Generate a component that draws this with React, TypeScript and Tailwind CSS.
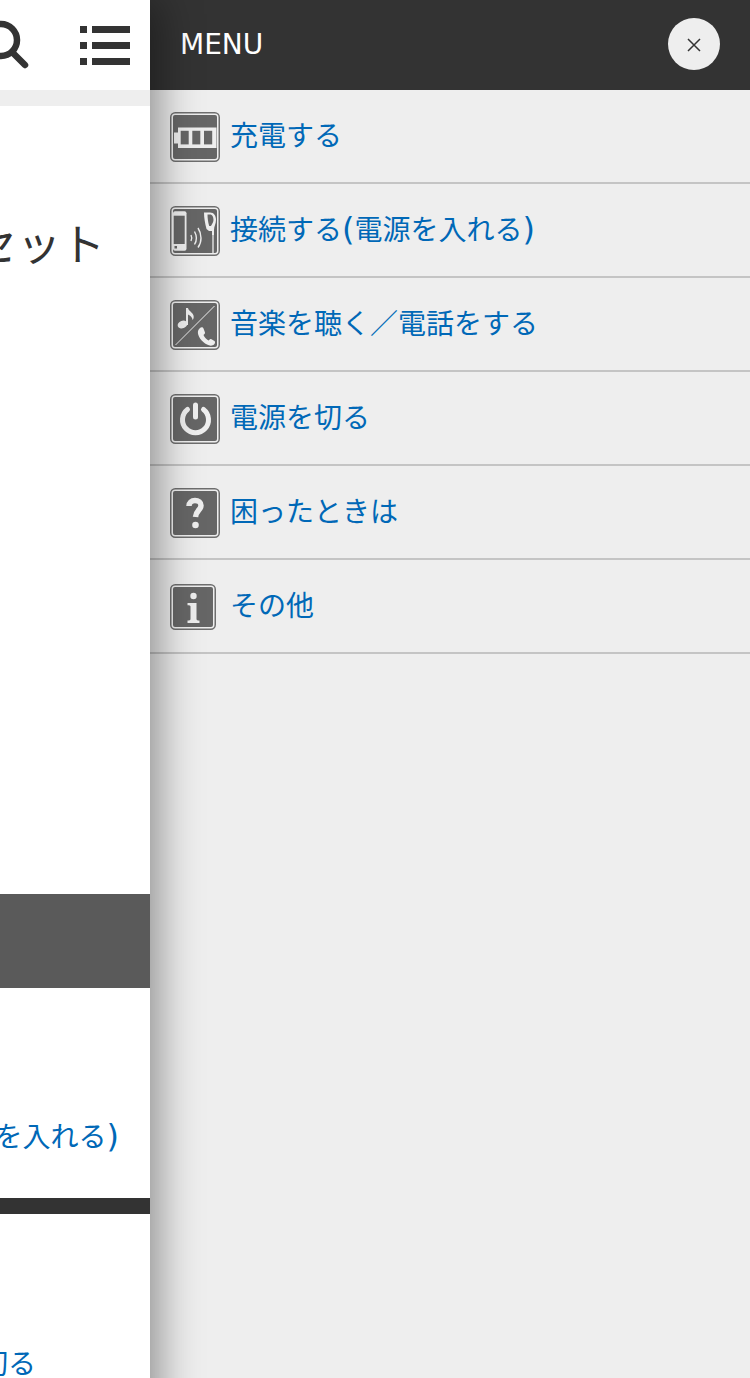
import React from "react";

const FONT = "font-['DejaVu_Sans','Noto_Sans_CJK_JP',sans-serif]";

const IconFrame = ({ size = 50, children }: any) => (
  <svg width={size} height={size} viewBox={`0 0 ${size} ${size}`} className="shrink-0">
    <rect x="0.75" y="0.75" width={size - 1.5} height={size - 1.5} rx="4.5" fill="#eeeeee" stroke="#6e6e6e" strokeWidth="1.5" />
    <rect x="3" y="3" width={size - 6} height={size - 6} rx="2" fill="#666666" />
    {children}
  </svg>
);

const BatteryIcon = () => (
  <IconFrame>
    <path d="M8 15.5H46.5V36H8V31.5H4V20.5H8Z" fill="#eeeeee" />
    <rect x="10.7" y="18.8" width="8" height="13.6" fill="#666666" />
    <rect x="22.3" y="18.8" width="8" height="13.6" fill="#666666" />
    <rect x="34" y="18.8" width="8.2" height="13.6" fill="#666666" />
  </IconFrame>
);

const ConnectIcon = () => (
  <IconFrame>
    <rect x="3" y="5.3" width="13.5" height="39.4" rx="2" fill="#eeeeee" />
    <rect x="3.7" y="9.7" width="11" height="28.3" fill="#666666" />
    <rect x="4.5" y="40" width="2.5" height="2.5" fill="#666666" />
    <path d="M21 29C22 31 22 33 21 35M24.5 25.5C27 30 27 34.5 24.5 38.5M28 22C32 28 32 36 28 41.5" fill="none" stroke="#eeeeee" strokeWidth="1.4" />
    <path d="M34 6.5H40C44 6.5 46 10 46 14C46 18 44 20 44 24L44 29H42V25H39L36.5 23C35 17 34 12 34 6.5Z" fill="#eeeeee" />
    <path d="M37.5 8.5H40C42.5 8.5 43.5 11 43.5 14C43.5 16 42 18 41 20H39.2C38 16 37.5 12 37.5 8.5Z" fill="#666666" />
    <path d="M43 28V47" stroke="#eeeeee" strokeWidth="1.3" />
  </IconFrame>
);

const MusicIcon = () => (
  <IconFrame>
    <path d="M5.5 45L44.5 6" stroke="#eeeeee" strokeWidth="1" />
    <ellipse cx="12.5" cy="24.5" rx="5" ry="3.7" fill="#eeeeee" transform="rotate(-20 12.5 24.5)" />
    <path d="M16 8H18C18.5 11 22.5 12 23.5 15.5C24 17.5 23.5 19 22.5 20C22.5 17.5 20.5 15.5 18 14.5V25H16Z" fill="#eeeeee" />
    <path d="M30 28C31 27 33 27 33.5 28.5L35 32.5C35.3 33.5 34 34.5 33.5 35C34.5 37.5 36.5 39.5 38.5 40.5C39 40 40 38.5 41 39L44.5 41C45.5 41.8 45 43.5 44 44.5C42.5 46 39.5 46 37 44.5C32 42 27 36 28 31C28.2 30 29 29 30 28Z" fill="#eeeeee" />
  </IconFrame>
);

const PowerIcon = () => (
  <IconFrame>
    <path d="M17.5 15.5A13 13 0 1 0 33.5 15.5" fill="none" stroke="#eeeeee" strokeWidth="5" strokeLinecap="round" />
    <path d="M25.5 11V23" stroke="#eeeeee" strokeWidth="5" strokeLinecap="round" />
  </IconFrame>
);

const HelpIcon = () => (
  <IconFrame>
    <path d="M19 18C19 14.5 21.5 12.5 25 12.5C28.5 12.5 31 14.5 31 17.5C31 22 26 22.5 25.5 29" fill="none" stroke="#eeeeee" strokeWidth="5.5" />
    <circle cx="25.5" cy="37" r="3.3" fill="#eeeeee" />
  </IconFrame>
);

const InfoIcon = () => (
  <IconFrame size={46}>
    <circle cx="23.5" cy="12" r="3.2" fill="#eeeeee" />
    <path d="M17.5 19H26.5V35C26.5 36 27.5 36.5 29.5 36.5V39H17.5V36.5C19.5 36.5 20.5 36 20.5 35V22.5C20.5 21.5 19.5 21.2 17.5 21.2Z" fill="#eeeeee" />
  </IconFrame>
);

// the parens in the picture are taller and wider than the kana around them
const Paren = ({ children }: any) => <span className="text-[32px] leading-none">{children}</span>;

const connectLabel = (
  <>
    接続する<Paren>(</Paren>電源を入れる<Paren>)</Paren>
  </>
);

const menu = [
  { id: "charge", label: "充電する", icon: <BatteryIcon /> },
  { id: "connect", label: connectLabel, icon: <ConnectIcon /> },
  { id: "music", label: "音楽を聴く／電話をする", icon: <MusicIcon /> },
  { id: "power", label: "電源を切る", icon: <PowerIcon /> },
  { id: "help", label: "困ったときは", icon: <HelpIcon /> },
  { id: "other", label: "その他", icon: <InfoIcon /> },
];

export default function App() {
  return (
    <div className={`flex h-[1378px] w-[750px] overflow-hidden bg-white ${FONT}`}>
      {/* page behind the menu, only its right edge is visible */}
      <div className="relative z-10 flex h-[1500px] w-[150px] shrink-0 flex-col overflow-hidden bg-white shadow-[8px_0_40px_rgba(0,0,0,0.42)]">
        <div className="flex h-[90px] shrink-0 items-center">
          <svg width="30" height="90" viewBox="0 0 30 90" className="shrink-0">
            <circle cx="1" cy="40" r="16" fill="none" stroke="#333333" strokeWidth="6.5" />
            <path d="M13 53L25 65" stroke="#333333" strokeWidth="6.5" strokeLinecap="round" />
          </svg>
          <div className="ml-[50px] flex flex-col gap-[9px]">
            {[0, 1, 2].map((i) => (
              <div key={i} className="flex gap-[5px]">
                <div className="h-[7px] w-[7px] bg-[#333333]" />
                <div className="h-[7px] w-[38px] bg-[#333333]" />
              </div>
            ))}
          </div>
        </div>
        <div className="h-4 shrink-0 bg-[#eeeeee]" />
        <div className="flex h-[788px] shrink-0 justify-end pr-[45px] pt-[110px]">
          <h1 className="whitespace-nowrap text-[44px] font-normal leading-[60px] text-[#333333]">ヘッドセット</h1>
        </div>
        <div className="h-[94px] shrink-0 bg-[#5a5a5a]" />
        <div className="flex h-[210px] shrink-0 justify-end pr-[31px] pt-[129px]">
          <span className="whitespace-nowrap text-[28px] leading-[42px] text-[#0068b7]">
            接続する<Paren>(</Paren>電源を入れる<Paren>)</Paren>
          </span>
        </div>
        <div className="h-4 shrink-0 bg-[#333333]" />
        <div className="flex flex-1 justify-end pr-[114px] pt-[130px]">
          <span className="whitespace-nowrap text-[28px] leading-[42px] text-[#0068b7]">電源を切る</span>
        </div>
      </div>

      {/* menu panel */}
      <div className="flex flex-1 flex-col bg-[#eeeeee]">
        <div className="flex h-[90px] shrink-0 items-center justify-between bg-[#333333] px-[30px]">
          <span className="text-[28px] leading-[42px] text-white">MENU</span>
          <button className="mb-[2px] flex h-[52px] w-[52px] items-center justify-center rounded-full bg-[#eeeeee]">
            <svg width="14" height="14" viewBox="0 0 14 14" className="mt-[2px]">
              <path d="M1 1L13 13M13 1L1 13" stroke="#333333" strokeWidth="1.5" />
            </svg>
          </button>
        </div>
        <ul>
          {menu.map((item) => (
            <li key={item.id} className="flex h-[94px] items-center gap-[10px] border-b-2 border-[#c4c4c4] pl-5 pt-[2px]">
              {item.icon}
              <a className={`text-[28px] leading-[42px] text-[#0068b7] ${item.id === "other" ? "ml-1" : ""}`}>{item.label}</a>
            </li>
          ))}
        </ul>
      </div>
    </div>
  );
}
